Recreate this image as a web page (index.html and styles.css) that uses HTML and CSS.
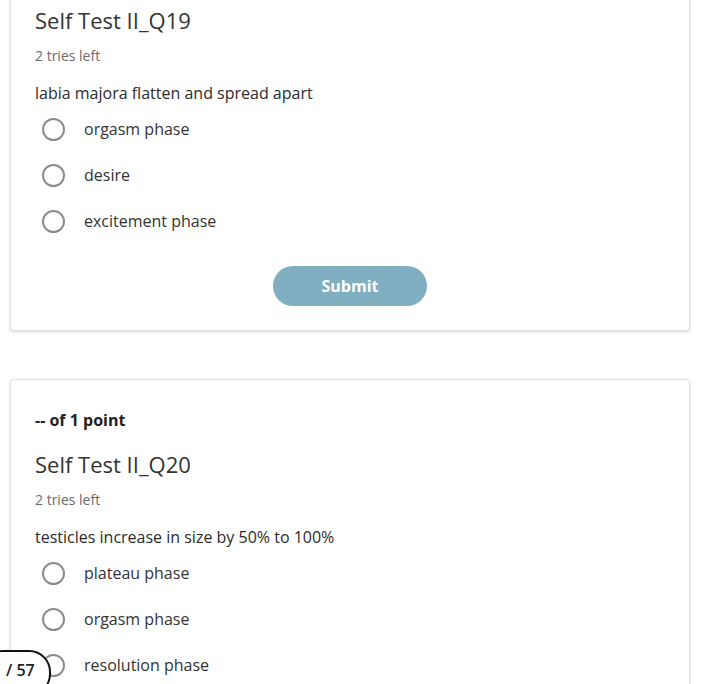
FILE: index.html
```html
<!DOCTYPE html>
<html lang="en">
<head>
    <meta charset="UTF-8">
    <meta name="viewport" content="width=device-width, initial-scale=1.0">
    <title>Self Test II</title>
    <link rel="stylesheet" href="styles.css">
</head>
<body>
    <div class="quiz">
        <div class="question-card">
            <div class="points">-- of 1 point</div>
            <h2 class="question-title">Self Test II_Q19</h2>
            <p class="tries">2 tries left</p>
            <p class="question-text">labia majora flatten and spread apart</p>
            <ul class="options">
                <li class="option"><span class="radio"></span>orgasm phase</li>
                <li class="option"><span class="radio"></span>desire</li>
                <li class="option"><span class="radio"></span>excitement phase</li>
            </ul>
            <div class="actions">
                <button class="submit-btn">Submit</button>
            </div>
        </div>

        <div class="question-card">
            <div class="points">-- of 1 point</div>
            <h2 class="question-title">Self Test II_Q20</h2>
            <p class="tries">2 tries left</p>
            <p class="question-text">testicles increase in size by 50% to 100%</p>
            <ul class="options">
                <li class="option"><span class="radio"></span>plateau phase</li>
                <li class="option"><span class="radio"></span>orgasm phase</li>
                <li class="option"><span class="radio"></span>resolution phase</li>
            </ul>
            <div class="actions">
                <button class="submit-btn">Submit</button>
            </div>
        </div>
    </div>

    <div class="page-count">/ 57</div>
</body>
</html>
```

FILE: styles.css
```css
body {
    margin: 0;
    font-family: "Open Sans", "Liberation Sans", Arial, sans-serif;
    color: #2b2b2b;
    background-color: #fff;
    overflow: hidden;
}
.quiz {
    width: 680px;
    margin: -65px 0 0 10px; /* page is scrolled down a bit */
    display: flex;
    flex-direction: column;
    gap: 48px;
}
.question-card {
    border: 1px solid #e2e2e2;
    border-radius: 4px;
    box-shadow: 0 1px 3px rgba(0,0,0,0.18);
    padding: 30px 24px 24px 24px;
    background-color: #fff;
}
.points {
    font-size: 16px;
    font-weight: 700;
    line-height: 20px;
    color: #222;
}
.question-title {
    margin: 19px 0 0 0;
    font-size: 22px;
    font-weight: 400;
    line-height: 30px;
    color: #333;
}
.tries {
    margin: 11px 0 0 0;
    font-size: 14px;
    line-height: 20px;
    color: #6b6b6b;
}
.question-text {
    margin: 16px 0 0 0;
    font-size: 16px;
    line-height: 22px;
    color: #2b2b2b;
}
.options {
    list-style: none;
    margin: 2px 0 0 0;
    padding: 0;
}
.option {
    display: flex;
    align-items: center;
    height: 46px;
    font-size: 16px;
    color: #333;
}
.radio {
    width: 19px;
    height: 19px;
    border: 2px solid #8c8c8c;
    border-radius: 50%;
    margin: 0 19px 0 7px;
    flex-shrink: 0;
}
.actions {
    display: flex;
    justify-content: center;
    margin-top: 22px;
}
.submit-btn {
    width: 154px;
    height: 40px;
    border: none;
    border-radius: 20px;
    background-color: #80afc1;
    color: #fff;
    font-family: inherit;
    font-size: 16px;
    font-weight: 700;
}
.page-count {
    position: fixed;
    left: -20px;
    bottom: -12px;
    padding: 0 14px 0 24px;
    height: 42px;
    line-height: 36px;
    border: 2px solid #111;
    border-radius: 22px;
    background-color: #fff;
    font-size: 16px;
    font-weight: 600;
    color: #222;
}
```
